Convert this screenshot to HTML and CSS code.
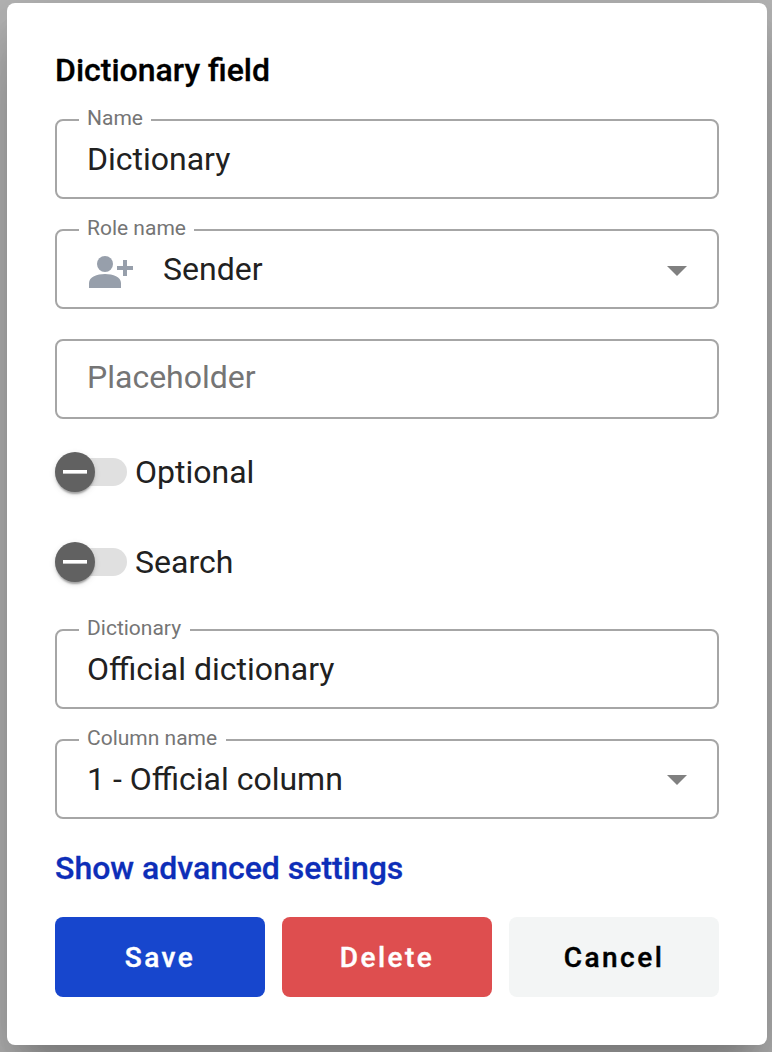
FILE: index.html
```html
<!DOCTYPE html>
<html lang="en">
<head>
<meta charset="utf-8">
<title>Dictionary field</title>
<link rel="stylesheet" href="styles.css">
</head>
<body>
<main class="dialog">
  <h1 class="title">Dictionary field</h1>
  <fieldset class="field">
    <legend class="legend"><span class="label">Name</span></legend>
    <div class="control"><span class="value">Dictionary</span></div>
  </fieldset>
  <fieldset class="field">
    <legend class="legend"><span class="label">Role name</span></legend>
    <div class="control">
      <svg class="role-icon" width="44" height="32" viewBox="0 0 44 32" fill="#979fab"><circle cx="16" cy="8" r="8"/><path d="M0 32V27C0 21 8 18 16 18S32 21 32 27V32ZM34 4h4v6h6v4h-6v6h-4v-6h-6v-4h6Z"/></svg>
      <span class="value">Sender</span>
      <svg class="arrow" width="20" height="10" viewBox="0 0 20 10" fill="#808080"><path d="M0 0h20L10 10Z"/></svg>
    </div>
  </fieldset>
  <fieldset class="field">
    <div class="control"><span class="value placeholder">Placeholder</span></div>
  </fieldset>
  <div class="toggle">
    <span class="track"><span class="thumb"><span class="dash"></span></span></span>
    <span class="toggle-text">Optional</span>
  </div>
  <div class="toggle">
    <span class="track"><span class="thumb"><span class="dash"></span></span></span>
    <span class="toggle-text">Search</span>
  </div>
  <fieldset class="field">
    <legend class="legend"><span class="label">Dictionary</span></legend>
    <div class="control"><span class="value">Official dictionary</span></div>
  </fieldset>
  <fieldset class="field">
    <legend class="legend"><span class="label">Column name</span></legend>
    <div class="control">
      <span class="value">1 - Official column</span>
      <svg class="arrow arrow-column" width="20" height="10" viewBox="0 0 20 10" fill="#808080"><path d="M0 0h20L10 10Z"/></svg>
    </div>
  </fieldset>
  <a class="advanced">Show advanced settings</a>
  <div class="actions">
    <button class="button save">Save</button>
    <button class="button delete">Delete</button>
    <button class="button cancel">Cancel</button>
  </div>
</main>
</body>
</html>
```

FILE: styles.css
```css
* { box-sizing: border-box; }
body {
  margin: 0;
  height: 1052px;
  padding: 3px 5px 7px 7px;
  overflow: hidden;
  background: #b7b7b7;
  font-family: Roboto, sans-serif;
  color: #212121;
}
.dialog {
  display: flex;
  flex-direction: column;
  height: 1042px;
  padding: 48px;
  border-radius: 8px;
  background: #fff;
  box-shadow: 0 22px 30px -14px rgba(0,0,0,.2), 0 48px 76px 6px rgba(0,0,0,.14), 0 18px 92px 16px rgba(0,0,0,.12);
}
.title {
  margin: 0 0 30px;
  height: 38px;
  font-size: 32px;
  line-height: 38px;
  font-weight: 500;
  color: #000;
  -webkit-text-stroke: .3px;
}
.field {
  flex: none;
  width: 664px;
  height: 80px;
  margin: 0 0 30px;
  padding: 0 30px;
  border: 2px solid #a6a6a6;
  border-radius: 8px;
}
.legend {
  height: 2px;
  margin-left: -8px;
  padding: 0 8.5px 0 8px;
}
.label {
  display: block;
  height: 24px;
  margin-top: -13px;
  font-size: 21px;
  line-height: 24px;
  color: #757575;
}
.control {
  display: flex;
  align-items: center;
  height: 76px;
}
.value {
  flex: 1;
  font-size: 32px;
  line-height: 38px;
}
.placeholder { color: #757575; padding-bottom: 4px; }
.role-icon { margin: 6px 30px 0 2px; }
.arrow { margin-top: 4px; }
.arrow-column { margin-top: 2px; }
.toggle {
  display: flex;
  align-items: center;
  height: 46px;
  margin-bottom: 44px;
}
.track {
  display: flex;
  align-items: center;
  width: 72px;
  height: 28px;
  border-radius: 14px;
  background: #e0e0e0;
}
.thumb {
  display: flex;
  align-items: center;
  justify-content: center;
  width: 40px;
  height: 40px;
  border-radius: 50%;
  background: #616161;
  box-shadow: 0 4px 2px -2px rgba(0,0,0,.2), 0 2px 2px rgba(0,0,0,.14), 0 2px 6px rgba(0,0,0,.12);
}
.dash {
  width: 24px;
  height: 4px;
  background: #fff;
  border-bottom: 1px solid #c4c4c4;
}
.toggle-text {
  margin-left: 8px;
  font-size: 32px;
  line-height: 38px;
}
.advanced {
  font-size: 32px;
  line-height: 38px;
  font-weight: 500;
  color: #0d2eb8;
  -webkit-text-stroke: .3px;
}
.actions {
  display: flex;
  gap: 17px;
  margin-top: 30px;
}
.button {
  width: 210px;
  height: 80px;
  padding: 2px 0 0;
  border: 0;
  border-radius: 8px;
  font: 500 28px/38px Roboto, sans-serif;
  letter-spacing: 2.5px;
  color: #fff;
  -webkit-text-stroke: .4px;
}
.save { background: #1746cd; }
.delete { background: #de4e4f; }
.cancel { background: #f3f5f5; color: #000; }
```
